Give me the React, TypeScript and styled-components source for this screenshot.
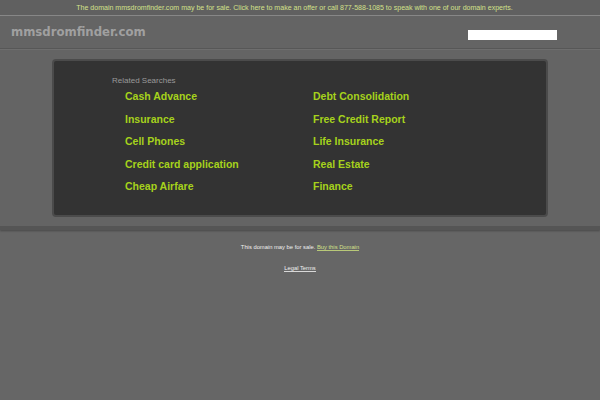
import styled, { createGlobalStyle } from "styled-components";

const Global = createGlobalStyle`
  html, body {
    margin: 0;
    padding: 0;
    background: #666666;
    font-family: "Liberation Sans", Arial, sans-serif;
  }
`;

const TopBar = styled.div`
  height: 15px;
  line-height: 15px;
  text-align: center;
  font-size: 7.05px;
  color: #d3e08a;
  background: #606060;
  border-bottom: 1px solid #8a8a8a;
  padding-right: 11px;
`;

const Main = styled.div`
  background: #646464;
  border-bottom: 4px solid #555555;
  box-shadow: 0 1px 2px rgba(0, 0, 0, 0.3);
`;

const Header = styled.div`
  height: 32px;
  display: flex;
  align-items: center;
  justify-content: space-between;
  padding: 0 43px 0 11px;
  border-bottom: 1px solid #575757;
  box-shadow: 0 1px 0 #6e6e6e;
`;

const Logo = styled.div`
  font-family: "DejaVu Sans", sans-serif;
  font-weight: bold;
  font-size: 11.7px;
  color: #a0a0a0;
`;

const Search = styled.input`
  width: 89px;
  height: 10px;
  border: 0;
  padding: 0;
  background: #ffffff;
  margin-top: 5px;
`;

const Body = styled.div`
  padding: 10px 52px 9px 52px;
`;

const Panel = styled.div`
  background: #333333;
  border: 2px solid #4b4b4b;
  border-radius: 4px;
  height: 154px;
  box-sizing: content-box;
`;

const Label = styled.div`
  font-size: 8px;
  color: #9a9a9a;
  padding: 15px 0 0 58px;
  height: 10px;
`;

const Grid = styled.div`
  display: grid;
  grid-template-columns: 188px 188px;
  padding: 3px 0 0 71px;
`;

const Link = styled.a`
  display: block;
  font-weight: bold;
  font-size: 10.5px;
  color: #a6d21c;
  height: 22.5px;
  line-height: 15px;
  text-decoration: none;
`;

const Footer = styled.div`
  text-align: center;
  font-size: 5.8px;
  color: #f0f0f0;
  padding-top: 14px;
`;

const Line = styled.div<{ $gap?: number }>`
  margin-top: ${(p) => p.$gap ?? 0}px;
`;

const FLink = styled.a<{ $green?: boolean }>`
  display: inline-block;
  line-height: 6px;
  color: ${(p) => (p.$green ? "#d3e08a" : "#f0f0f0")};
  text-decoration: none;
  border-bottom: 1px solid ${(p) => (p.$green ? "#b8c878" : "#d8d8d8")};
`;

const left = ["Cash Advance", "Insurance", "Cell Phones", "Credit card application", "Cheap Airfare"];
const right = ["Debt Consolidation", "Free Credit Report", "Life Insurance", "Real Estate", "Finance"];

export default function App() {
  return (
    <>
      <Global />
      <TopBar>
        The domain mmsdromfinder.com may be for sale. Click here to make an offer or call 877-588-1085 to speak with one of our domain experts.
      </TopBar>
      <Main>
        <Header>
          <Logo>mmsdromfinder.com</Logo>
          <Search />
        </Header>
        <Body>
          <Panel>
            <Label>Related Searches</Label>
            <Grid>
              <div>
                {left.map((t) => (
                  <Link key={t}>{t}</Link>
                ))}
              </div>
              <div>
                {right.map((t) => (
                  <Link key={t}>{t}</Link>
                ))}
              </div>
            </Grid>
          </Panel>
        </Body>
      </Main>
      <Footer>
        <Line>
          This domain may be for sale. <FLink $green>Buy this Domain</FLink>
        </Line>
        <Line $gap={14}>
          <FLink>Legal Terms</FLink>
        </Line>
      </Footer>
    </>
  );
}
